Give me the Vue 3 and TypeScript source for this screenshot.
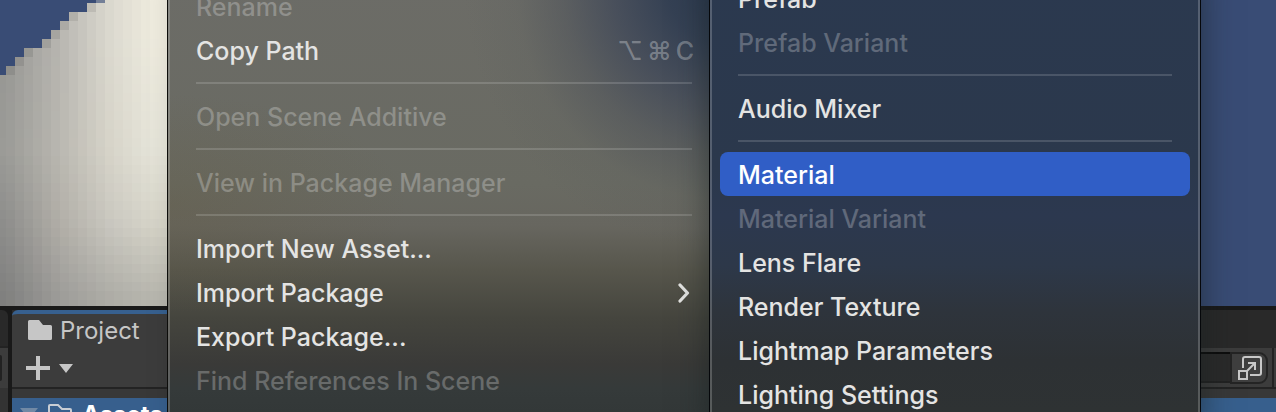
<script setup lang="ts">
interface Entry {
  label: string
  disabled?: boolean
  keys?: string[]
  submenu?: boolean
  active?: boolean
}
type Group = Entry[]

const assetGroups: Group[] = [
  [
    { label: 'Rename', disabled: true },
    { label: 'Copy Path', keys: ['⌥', '⌘', 'C'] },
  ],
  [{ label: 'Open Scene Additive', disabled: true }],
  [{ label: 'View in Package Manager', disabled: true }],
  [
    { label: 'Import New Asset...' },
    { label: 'Import Package', submenu: true },
    { label: 'Export Package...' },
    { label: 'Find References In Scene', disabled: true },
  ],
]

const createGroups: Group[] = [
  [{ label: 'Prefab' }, { label: 'Prefab Variant', disabled: true }],
  [{ label: 'Audio Mixer' }],
  [
    { label: 'Material', active: true },
    { label: 'Material Variant', disabled: true },
    { label: 'Lens Flare' },
    { label: 'Render Texture' },
    { label: 'Lightmap Parameters' },
    { label: 'Lighting Settings' },
  ],
]

// Low-resolution preview sphere: colour samples blended across a 9px grid.
type Rgb = [number, number, number]
const sampleX = [5, 60, 110, 155]
const sampleY = [40, 150, 220, 300]
const samples: Rgb[][] = [
  [[150, 150, 147], [184, 182, 177], [219, 217, 207], [239, 236, 223]],
  [[155, 155, 151], [186, 184, 177], [215, 212, 201], [230, 229, 218]],
  [[142, 142, 140], [178, 175, 168], [202, 200, 192], [216, 214, 202]],
  [[127, 127, 126], [156, 155, 152], [172, 171, 165], [182, 181, 173]],
]
const rowStart = [96, 87, 69, 60, 51, 42, 24, 15, 6]

function locate(stops: number[], v: number): [number, number] {
  let i = 0
  while (i < stops.length - 2 && v > stops[i + 1]) i++
  const t = (v - stops[i]) / (stops[i + 1] - stops[i])
  return [i, Math.min(1, Math.max(0, t))]
}

function shade(x: number, y: number, edge: boolean): string {
  const [i, tx] = locate(sampleX, x)
  const [j, ty] = locate(sampleY, y)
  const c = [0, 1, 2].map((k) => {
    const top = samples[j][i][k] * (1 - tx) + samples[j][i + 1][k] * tx
    const low = samples[j + 1][i][k] * (1 - tx) + samples[j + 1][i + 1][k] * tx
    return Math.round((top * (1 - ty) + low * ty) * (edge ? 0.92 : 1))
  })
  return `rgb(${c.join(',')})`
}

const cells: { x: number; y: number; fill: string }[] = []
for (let row = 0; row < 35; row++) {
  const y = row * 9 - 6
  const start = rowStart[row] ?? -3
  for (let x = start; x < 170; x += 9) {
    const edge = row < rowStart.length && x === start
    cells.push({ x, y, fill: row === 0 && edge ? '#737f97' : shade(x + 4, y + 4, edge) })
  }
}
</script>

<template>
  <main class="editor">
    <section class="scene" aria-label="Scene">
      <svg class="sphere" width="170" height="306" shape-rendering="crispEdges" aria-hidden="true">
        <rect v-for="(c, i) in cells" :key="i" :x="c.x" :y="c.y" width="9" height="9" :fill="c.fill" />
      </svg>
    </section>

    <section class="dock">
      <div class="side">
        <div class="side-tab"></div>
        <div class="side-bar"><span class="side-field"></span></div>
        <div class="side-body"></div>
      </div>
      <div class="project">
        <header class="tabs">
          <button type="button" class="tab">
            <svg width="24" height="20" viewBox="0 0 24 20" aria-hidden="true">
              <path d="M1.500 0H11L15 5H22.500Q24 5 24 6.500V18.500Q24 20 22.500 20H1.500Q0 20 0 18.500V1.500Q0 0 1.500 0Z" fill="#c6c6c6" />
            </svg>
            Project
          </button>
        </header>
        <div class="toolbar">
          <button type="button" class="add" aria-label="Create">
            <svg width="48" height="24" viewBox="0 0 48 24" aria-hidden="true">
              <path d="M10 0H14V10H24V14H14V24H10V14H0V10H10ZM33 8H47L40 17Z" fill="#c6c6c6" />
            </svg>
          </button>
          <div class="search">
            <input type="text" class="search-input" aria-label="Search assets" />
            <button type="button" class="search-open" aria-label="Open in Search">
              <svg width="24" height="24" viewBox="0 0 24 24" fill="none" stroke="#c8c8c8" stroke-width="2" aria-hidden="true">
                <path d="M5 12V3Q5 1 7 1H21Q23 1 23 3V17Q23 19 21 19H12" />
                <path d="M1 15H9V23H1Z" />
                <path d="M9 15L17 7M10 7H17V14" />
              </svg>
            </button>
          </div>
        </div>
        <div class="tree">
          <div class="tree-row">
            <svg width="18" height="12" viewBox="0 0 18 12" aria-hidden="true">
              <path d="M0 0H18L9 11Z" fill="#7189a5" />
            </svg>
            <svg width="24" height="20" viewBox="0 0 24 20" fill="none" aria-hidden="true">
              <path d="M1 18V2Q1 1 2 1H10L14 5H22Q23 5 23 6V18Q23 19 22 19H2Q1 19 1 18Z" stroke="#c8cdd4" stroke-width="2" />
            </svg>
            <span>Assets</span>
          </div>
        </div>
      </div>
    </section>

    <nav class="menu assets" aria-label="Assets">
      <ul v-for="(group, g) in assetGroups" :key="g" class="group">
        <li v-for="item in group" :key="item.label">
          <button type="button" class="item" :disabled="item.disabled">
            <span>{{ item.label }}</span>
            <span v-if="item.keys" class="keys">
              <kbd v-for="k in item.keys" :key="k">{{ k }}</kbd>
            </span>
            <svg v-if="item.submenu" class="chevron" width="14" height="20" viewBox="0 0 14 20" aria-hidden="true">
              <path d="M2 2L9.500 10L2 18" fill="none" stroke="#e4e4e2" stroke-width="3.200" stroke-linecap="round" stroke-linejoin="round" />
            </svg>
          </button>
        </li>
      </ul>
    </nav>

    <nav class="menu create" aria-label="Create">
      <ul v-for="(group, g) in createGroups" :key="g" class="group">
        <li v-for="item in group" :key="item.label">
          <button type="button" class="item" :class="{ active: item.active }" :disabled="item.disabled">
            <span>{{ item.label }}</span>
          </button>
        </li>
      </ul>
    </nav>
  </main>
</template>

<style>
body {
  margin: 0;
  background: #191919;
}
</style>

<style scoped>
.editor {
  position: relative;
  display: flex;
  flex-direction: column;
  height: 100vh;
  overflow: hidden;
  background: #191919;
  font-family: Inter, "Liberation Sans", sans-serif;
}
button {
  border: 0;
  margin: 0;
  padding: 0;
  background: none;
  font: inherit;
  color: inherit;
}
svg {
  display: block;
  flex: none;
}

.scene {
  flex: 0 0 306px;
  overflow: hidden;
  background: #394c75;
}

.dock {
  flex: 1;
  display: flex;
  gap: 4px;
  padding-top: 4px;
  min-height: 0;
}
.side {
  flex: 0 0 8px;
  display: flex;
  flex-direction: column;
}
.side-tab {
  height: 38px;
  box-sizing: border-box;
  border-bottom: 2px solid #232323;
  border-top-right-radius: 6px;
  background: #292929;
}
.side-bar {
  display: flex;
  align-items: center;
  height: 40px;
  background: #3c3c3c;
}
.side-field {
  width: 2px;
  height: 26px;
  border-radius: 0 4px 4px 0;
  background: #222;
}
.side-body {
  flex: 1;
  background: #333;
}

.project {
  flex: 1;
  display: flex;
  flex-direction: column;
  min-width: 0;
}
.tabs {
  display: flex;
  height: 38px;
  background: #292929;
}
.tab {
  display: flex;
  align-items: center;
  gap: 8px;
  box-sizing: border-box;
  width: 200px;
  padding: 0 16px 2px;
  border-top: 4px solid #37608f;
  border-top-left-radius: 6px;
  background: #3c3c3c;
  color: #c6c6c6;
  font-size: 24px;
}
.toolbar {
  display: flex;
  align-items: center;
  justify-content: space-between;
  box-sizing: border-box;
  height: 41px;
  padding: 0 2px 0 14px;
  border-bottom: 2px solid #232323;
  background: #3c3c3c;
}
.search {
  display: flex;
  align-items: center;
  height: 100%;
  padding-right: 4px;
  border-right: 2px solid #232323;
}
.search-input {
  box-sizing: border-box;
  width: 200px;
  height: 31px;
  padding: 0 8px;
  border: 0;
  border-top: 2px solid #0d0d0d;
  border-bottom: 2px solid #222;
  background: #2a2a2a;
  color: #d2d2d2;
  font: inherit;
}
.search-open {
  display: flex;
  align-items: center;
  justify-content: center;
  box-sizing: border-box;
  width: 38px;
  height: 32px;
  padding-left: 2px;
  border: 2px solid #242424;
  border-radius: 0 9px 9px 0;
  background: #3f3f3f;
}
.tree {
  flex: 1;
  padding-top: 9px;
  background: #383838;
  overflow: hidden;
}
.tree-row {
  display: flex;
  align-items: center;
  gap: 10px;
  height: 32px;
  padding-left: 8px;
  background: #375f8d;
  color: #fff;
  font-size: 24px;
  font-weight: 700;
}

.menu {
  position: absolute;
  bottom: -20px;
  box-sizing: border-box;
  padding: 0 8px;
  border: 2px solid rgba(255, 255, 255, 0.2);
  border-top: 0;
  background-origin: border-box;
  color: #e4e4e3;
  font-size: 25px;
  font-weight: 500;
  line-height: 30px;
}
.assets {
  top: -16px;
  left: 168px;
  width: 552px;
  box-shadow: 0 0 0 1px #0c0c0a, 0 0 24px rgba(0, 0, 0, 0.1);
  background-color: #353a3a;
  background-image:
    radial-gradient(ellipse 260px 270px at 556px 0, #2a384e 0%, rgba(48, 61, 82, 0.92) 22%, rgba(60, 69, 87, 0.75) 42%, rgba(72, 78, 88, 0.45) 62%, rgba(90, 94, 94, 0.2) 80%, rgba(100, 103, 100, 0) 100%),
    radial-gradient(ellipse 240px 110px at 0 220px, rgba(98, 88, 60, 0.28), rgba(98, 88, 60, 0)),
    linear-gradient(180deg, #6c6c67 0, #696a62 200px, #67665f 242px, #57564c 286px, #45453e 334px, #3a3a38 380px, #353a3a 405px, #333838 428px);
}
.create {
  top: -24px;
  left: 710px;
  width: 490px;
  box-shadow: 0 0 0 1px #05070a, 0 0 32px rgba(20, 30, 30, 0.6);
  background-color: #2d3132;
  background-image: linear-gradient(180deg, #2b394f 0, #2b384c 190px, #2c384f 240px, #2d3849 290px, #2e343c 335px, #2d3134 385px, #2e3233 436px);
}
.group {
  list-style: none;
  margin: 0;
  padding: 0;
}
.group + .group::before {
  content: "";
  display: block;
  height: 2px;
  margin: 10px 18px;
  background: rgba(255, 255, 255, 0.15);
}
.item {
  display: flex;
  align-items: center;
  justify-content: space-between;
  box-sizing: border-box;
  width: 100%;
  height: 44px;
  padding: 2px 18px 0;
  border-radius: 8px;
  text-align: left;
  white-space: nowrap;
}
.item:disabled {
  color: rgba(255, 255, 255, 0.25);
}
.item.active {
  background: #305ec6;
  color: #fff;
}
.keys {
  display: flex;
  gap: 4px;
  margin-right: -2px;
  color: rgba(255, 255, 255, 0.3);
}
kbd {
  font-family: Inter, "DejaVu Sans", sans-serif;
}
</style>
